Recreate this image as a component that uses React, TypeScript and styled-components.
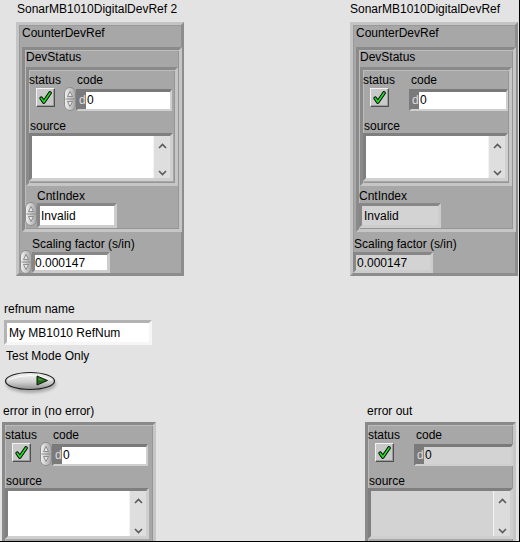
import React from 'react';
import styled, { createGlobalStyle } from 'styled-components';

const GlobalStyle = createGlobalStyle`
  body {
    margin: 0;
    background: #e3e3e3;
  }
`;

const Panel = styled.div`
  width: 520px;
  height: 542px;
  box-sizing: border-box;
  background: #e3e3e3;
  border-right: 1px solid #000;
  border-bottom: 1px solid #000;
  font-family: "Liberation Sans", Arial, sans-serif;
  font-size: 12px;
  color: #000;
  overflow: hidden;
  display: flex;
  flex-direction: column;
`;

const TopRow = styled.div`
  display: flex;
  padding-top: 2px;
  height: 276px;
  box-sizing: border-box;
`;

const Group = styled.div<{ $left: number }>`
  display: flex;
  flex-direction: column;
  margin-left: ${p => p.$left}px;
`;

const Caption = styled.div<{ $ml?: number; $mt?: number; $mb?: number }>`
  line-height: 15px;
  height: 15px;
  white-space: nowrap;
  margin: ${p => p.$mt ?? 0}px 0 ${p => p.$mb ?? 0}px ${p => p.$ml ?? 0}px;
`;

const Cluster = styled.div<{ $w: number; $h: number; $outer?: boolean }>`
  width: ${p => p.$w}px;
  height: ${p => p.$h}px;
  box-sizing: border-box;
  background: #a7a7a7;
  border: 3px solid;
  border-color: ${p =>
    p.$outer ? '#c4c4c4 #8d8d8d #8d8d8d #c4c4c4' : '#8a8a8a #c6c6c6 #c6c6c6 #8a8a8a'};
  box-shadow: ${p =>
    p.$outer ? 'inset 1px 1px 0 #9a9a9a' : 'inset 1px 1px 0 #bcbcbc, inset -1px -1px 0 #959595'};
  display: flex;
  flex-direction: column;
  flex-shrink: 0;
`;

const Row = styled.div<{ $mt?: number; $h: number }>`
  display: flex;
  align-items: flex-start;
  height: ${p => p.$h}px;
  margin-top: ${p => p.$mt ?? 0}px;
`;

/* error cluster parts */
const LabelRow = styled.div`
  display: flex;
  align-items: flex-end;
  height: 17px;
`;

const StatusLabel = styled.span`
  width: 48px;
  line-height: 14px;
`;

const CodeLabel = styled.span`
  line-height: 14px;
`;

const SourceLabel = styled.div`
  height: 23px;
  box-sizing: border-box;
  padding: 9px 0 0 1px;
  line-height: 14px;
`;

const CheckBtn = styled.div`
  width: 19px;
  height: 19px;
  box-sizing: border-box;
  margin: 1px 0 0 7px;
  background: #c9c9c9;
  border: 1px solid;
  border-color: #f2f2f2 #4f4f4f #4f4f4f #f2f2f2;
  box-shadow: inset -1px -1px 0 #9b9b9b;
  display: flex;
  align-items: center;
  justify-content: center;
  flex-shrink: 0;
`;

const SpinSlot = styled.div<{ $ml: number; $mt?: number }>`
  width: 12px;
  height: 24px;
  margin: ${p => p.$mt ?? 0}px 0 0 ${p => p.$ml}px;
  flex-shrink: 0;
`;

const NumFrame = styled.div<{ $w: number; $ml?: number; $mt?: number }>`
  width: ${p => p.$w}px;
  height: 22px;
  box-sizing: border-box;
  margin: ${p => p.$mt ?? 2}px 0 0 ${p => p.$ml ?? 0}px;
  display: flex;
  border-style: solid;
  border-width: 3px 2px 2px 2px;
  border-color: #7a7a7a #cfcfcf #cfcfcf #7a7a7a;
  flex-shrink: 0;
`;

const Radix = styled.span`
  width: 7px;
  background: #7a7a7a;
  color: #dcdcdc;
  line-height: 17px;
  padding-left: 1px;
`;

const NumValue = styled.span<{ $bg: string }>`
  flex: 1;
  background: ${p => p.$bg};
  line-height: 17px;
  padding-left: 1px;
`;

const SourceBox = styled.div<{ $w: number; $h: number; $bg: string }>`
  width: ${p => p.$w}px;
  height: ${p => p.$h}px;
  box-sizing: border-box;
  border: 3px solid;
  border-color: #7f7f7f #cfcfcf #cfcfcf #7f7f7f;
  background: ${p => p.$bg};
  display: flex;
  justify-content: flex-end;
  flex-shrink: 0;
`;

const ScrollBar = styled.div<{ $bg: string }>`
  width: 16px;
  background: ${p => p.$bg};
  border-left: 1px solid #f4f4f4;
  display: flex;
  flex-direction: column;
  justify-content: space-between;
  align-items: center;
  padding: 7px 0 2px;
`;

const TextField = styled.div<{ $w: number; $h: number; $bg: string; $ml?: number; $mt?: number; $pl?: number; $light?: boolean }>`
  width: ${p => p.$w}px;
  height: ${p => p.$h}px;
  box-sizing: border-box;
  margin: ${p => p.$mt ?? 0}px 0 0 ${p => p.$ml ?? 0}px;
  padding-left: ${p => p.$pl ?? 1}px;
  background: ${p => p.$bg};
  border: 3px solid;
  border-color: ${p =>
    p.$light ? '#b3b3b3 #f6f6f6 #f6f6f6 #b3b3b3' : '#878787 #cdcdcd #cdcdcd #878787'};
  display: flex;
  align-items: center;
  white-space: nowrap;
  flex-shrink: 0;
`;

const MidBlock = styled.div`
  display: flex;
  flex-direction: column;
  padding-left: 4px;
`;

const ToggleWrap = styled.div`
  margin-top: 4px;
  height: 28px;
`;

const BottomRow = styled.div`
  display: flex;
  margin-top: 8px;
`;

const Spinner = () => (
  <svg width="12" height="24" viewBox="0 0 12 24">
    <defs>
      <linearGradient id="spinGrad" x1="0" x2="1" y1="0" y2="0">
        <stop offset="0" stopColor="#f3f3f3" />
        <stop offset="1" stopColor="#a4a4a4" />
      </linearGradient>
    </defs>
    <rect x="0.5" y="0.5" width="11" height="23" rx="5.5" fill="url(#spinGrad)" stroke="#8c8c8c" />
    <line x1="1.5" y1="12" x2="10.5" y2="12" stroke="#8c8c8c" />
    <path d="M3.5 9.5 L6 4.5 L8.5 9.5 Z" fill="#e6e6e6" stroke="#7a7a7a" strokeWidth="0.8" />
    <path d="M3.5 14.5 L6 19.5 L8.5 14.5 Z" fill="#e6e6e6" stroke="#7a7a7a" strokeWidth="0.8" />
  </svg>
);

const Check = () => (
  <svg width="13" height="13" viewBox="0 0 13 13">
    <path d="M2.2 7.2 L4.8 11 L11 2" fill="none" stroke="#000" strokeWidth="3.6" strokeLinecap="round" strokeLinejoin="round" />
    <path d="M2.2 7.2 L4.8 11 L11 2" fill="none" stroke="#1ee01e" strokeWidth="1.7" strokeLinecap="round" strokeLinejoin="round" />
  </svg>
);

const Chevron = ({ down }: { down?: boolean }) => (
  <svg width="9" height="6" viewBox="0 0 9 6">
    <polyline
      points={down ? '1,1 4.5,4.5 8,1' : '1,5 4.5,1.5 8,5'}
      fill="none"
      stroke="#5a5a5a"
      strokeWidth="1.6"
    />
  </svg>
);

interface ErrProps {
  w: number;
  h: number;
  srcH?: number;
  control?: boolean;
  codeBg: string;
  srcBg: string;
  barBg: string;
  ml?: number;
}

const ErrorCluster = ({ w, h, srcH = 48, control, codeBg, srcBg, barBg, ml }: ErrProps) => (
  <Cluster $w={w} $h={h} style={ml ? { marginLeft: ml } : undefined}>
    <LabelRow>
      <StatusLabel>status</StatusLabel>
      <CodeLabel>code</CodeLabel>
    </LabelRow>
    <Row $h={23}>
      <CheckBtn>
        <Check />
      </CheckBtn>
      {control ? (
        <>
          <SpinSlot $ml={9}>
            <Spinner />
          </SpinSlot>
          <NumFrame $w={96}>
            <Radix>d</Radix>
            <NumValue $bg={codeBg}>0</NumValue>
          </NumFrame>
        </>
      ) : (
        <NumFrame $w={99} $ml={20}>
          <Radix>d</Radix>
          <NumValue $bg={codeBg}>0</NumValue>
        </NumFrame>
      )}
    </Row>
    <SourceLabel>source</SourceLabel>
    <SourceBox $w={control ? 144 : 145} $h={srcH} $bg={srcBg}>
      <ScrollBar $bg={barBg}>
        <Chevron />
        <Chevron down />
      </ScrollBar>
    </SourceBox>
  </Cluster>
);

const DevRefCluster = ({ control }: { control?: boolean }) => (
  <Cluster $w={168} $h={254} $outer>
    <Caption $ml={3} $mt={1} $mb={6}>CounterDevRef</Caption>
    <Cluster $w={160} $h={185} style={{ marginLeft: 3 }}>
      <Caption $ml={1} $mb={2}>DevStatus</Caption>
      <ErrorCluster
        w={152}
        h={119}
        ml={1}
        control={control}
        codeBg="#fff"
        srcBg="#fff"
        barBg="#dedede"
      />
      <Caption $ml={control ? 12 : 0} $mt={3}>CntIndex</Caption>
      <Row $h={26} $mt={-1}>
        {control ? (
          <>
            <SpinSlot $ml={0} $mt={-1}>
              <Spinner />
            </SpinSlot>
            <TextField $w={80} $h={25} $bg="#fff" $pl={1}>Invalid</TextField>
          </>
        ) : (
          <TextField $w={82} $h={25} $bg="#d3d3d3" $pl={2}>Invalid</TextField>
        )}
      </Row>
    </Cluster>
    <Caption $ml={control ? 13 : 1} $mt={5}>Scaling factor (s/in)</Caption>
    <Row $h={23} $mt={-2}>
      {control ? (
        <>
          <SpinSlot $ml={1}>
            <Spinner />
          </SpinSlot>
          <TextField $w={78} $h={21} $bg="#fff" $mt={2} $pl={0}>0.000147</TextField>
        </>
      ) : (
        <TextField $w={80} $h={21} $bg="#d3d3d3" $mt={2} $pl={1}>0.000147</TextField>
      )}
    </Row>
  </Cluster>
);

const Toggle = () => (
  <svg width="56" height="28" viewBox="0 0 56 28">
    <defs>
      <linearGradient id="togBody" x1="0" x2="0" y1="0" y2="1">
        <stop offset="0" stopColor="#f4f4f4" />
        <stop offset="0.55" stopColor="#d2d2d2" />
        <stop offset="1" stopColor="#8e8e8e" />
      </linearGradient>
      <filter id="togBlur" x="-20%" y="-40%" width="140%" height="180%">
        <feGaussianBlur stdDeviation="1.6" />
      </filter>
    </defs>
    <ellipse cx="27" cy="16" rx="25" ry="9" fill="#7a7a7a" opacity="0.55" filter="url(#togBlur)" />
    <ellipse cx="26" cy="13" rx="24.5" ry="8.5" fill="url(#togBody)" stroke="#1e1e1e" strokeWidth="1.2" />
    <path d="M4 12 Q26 3 48 12" fill="none" stroke="#ffffff" strokeWidth="1" opacity="0.8" />
    <polygon points="33,8 43.5,12.5 33,17" fill="#276b1c" stroke="#0f1f0c" strokeWidth="1" />
    <polygon points="34.5,10 40,12.3 34.5,12.3" fill="#4f9e3e" />
  </svg>
);

const App = () => (
  <Panel>
    <GlobalStyle />
    <TopRow>
      <Group $left={16}>
        <Caption $ml={1} $mb={5}>SonarMB1010DigitalDevRef 2</Caption>
        <DevRefCluster control />
      </Group>
      <Group $left={166}>
        <Caption $ml={0} $mb={5}>SonarMB1010DigitalDevRef</Caption>
        <DevRefCluster />
      </Group>
    </TopRow>
    <MidBlock>
      <Caption $mt={26}>refnum name</Caption>
      <TextField $w={148} $h={25} $bg="#fff" $mt={3} $pl={2} $light>
        My MB1010 RefNum
      </TextField>
      <Caption $mt={4} $ml={2}>Test Mode Only</Caption>
      <ToggleWrap>
        <Toggle />
      </ToggleWrap>
    </MidBlock>
    <BottomRow>
      <Group $left={2}>
        <Caption $ml={1} $mb={3}>error in (no error)</Caption>
        <ErrorCluster w={154} h={124} srcH={51} control codeBg="#fff" srcBg="#fff" barBg="#dedede" />
      </Group>
      <Group $left={209}>
        <Caption $ml={2} $mb={3}>error out</Caption>
        <ErrorCluster w={151} h={124} srcH={51} codeBg="#d3d3d3" srcBg="#d3d3d3" barBg="#dcdcdc" />
      </Group>
    </BottomRow>
  </Panel>
);

export default App;
